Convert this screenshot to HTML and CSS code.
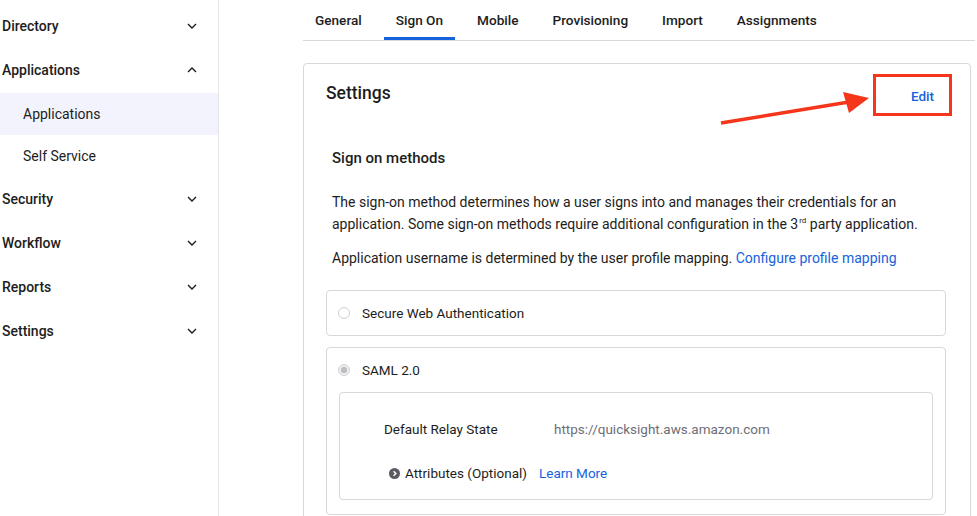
FILE: index.html
```html
<!DOCTYPE html>
<html lang="en">
<head>
    <meta charset="UTF-8">
    <meta name="viewport" content="width=device-width, initial-scale=1.0">
    <link rel="stylesheet" href="styles.css">
    <title>Sign On</title>
</head>
<body>
    <div class="page">
        <nav class="sidebar">
            <div class="nav-item">Directory <svg class="chev" viewBox="0 0 10 6"><path d="M1 1l4 4 4-4"/></svg></div>
            <div class="nav-item">Applications <svg class="chev" viewBox="0 0 10 6"><path d="M1 5l4-4 4 4"/></svg></div>
            <div class="nav-sub active">Applications</div>
            <div class="nav-sub">Self Service</div>
            <div class="nav-item">Security <svg class="chev" viewBox="0 0 10 6"><path d="M1 1l4 4 4-4"/></svg></div>
            <div class="nav-item">Workflow <svg class="chev" viewBox="0 0 10 6"><path d="M1 1l4 4 4-4"/></svg></div>
            <div class="nav-item">Reports <svg class="chev" viewBox="0 0 10 6"><path d="M1 1l4 4 4-4"/></svg></div>
            <div class="nav-item">Settings <svg class="chev" viewBox="0 0 10 6"><path d="M1 1l4 4 4-4"/></svg></div>
        </nav>

        <main class="main">
            <div class="tabs">
                <div class="tab">General</div>
                <div class="tab active">Sign On</div>
                <div class="tab">Mobile</div>
                <div class="tab">Provisioning</div>
                <div class="tab">Import</div>
                <div class="tab">Assignments</div>
            </div>

            <section class="card">
                <div class="card-head">
                    <h2>Settings</h2>
                    <a class="edit" href="#">Edit</a>
                    <div class="highlight"></div>
                    <svg class="arrow" width="160" height="36" viewBox="0 0 160 36">
                        <line x1="2" y1="32" x2="130" y2="11" stroke="#f5361b" stroke-width="3.5"/>
                        <polygon points="150,7 124,1 130,22" fill="#f5361b"/>
                    </svg>
                </div>

                <h3>Sign on methods</h3>
                <p class="desc">The sign-on method determines how a user signs into and manages their credentials for an application. Some sign-on methods require additional configuration in the 3<sup>rd</sup> party application.</p>
                <p class="desc">Application username is determined by the user profile mapping. <a href="#">Configure profile mapping</a></p>

                <div class="option first">
                    <div class="option-row"><span class="radio"></span>Secure Web Authentication</div>
                </div>
                <div class="option">
                    <div class="option-row"><span class="radio checked"></span>SAML 2.0</div>
                    <div class="inner">
                        <div class="field">
                            <span class="label">Default Relay State</span>
                            <span class="value">https://quicksight.aws.amazon.com</span>
                        </div>
                        <div class="attrs">
                            <svg class="toggle" viewBox="0 0 12 12"><circle cx="6" cy="6" r="6"/><path d="M5 3.5l2.5 2.5L5 8.5"/></svg>
                            Attributes (Optional)
                            <a href="#">Learn More</a>
                        </div>
                    </div>
                </div>
            </section>
        </main>
    </div>
</body>
</html>
```

FILE: styles.css
```css
body {
    margin: 0;
    font-family: Roboto, "Noto Sans", sans-serif;
    color: #1d1d21;
    background: #fff;
    overflow: hidden;
}

a {
    color: #1662dd;
    text-decoration: none;
}

.page {
    display: flex;
    height: 516px;
}

.sidebar {
    width: 218px;
    flex-shrink: 0;
    border-right: 1px solid #e5e5e8;
    padding-top: 4px;
}

.nav-item {
    display: flex;
    justify-content: space-between;
    align-items: center;
    height: 44px;
    padding: 0 21px 0 2px;
    font-size: 14px;
    font-weight: 500;
}

.chev {
    width: 10px;
    height: 6px;
    fill: none;
    stroke: #1d1d21;
    stroke-width: 1.4;
}

.nav-sub {
    height: 42px;
    line-height: 42px;
    padding-left: 23px;
    font-size: 14px;
}

.nav-sub.active {
    margin-top: 1px;
    background: #f2f3fd;
}

.main {
    margin-left: 84px;
    width: 672px;
}

.tabs {
    display: flex;
    gap: 10px;
    border-bottom: 1px solid #d7d7dc;
    height: 40px;
    margin-bottom: -1px;
}

.tab {
    font-size: 13.6px;
    font-weight: 500;
    line-height: 40px;
    padding: 0 12px;
}

.tab.active {
    box-shadow: inset 0 -3px 0 #1662dd;
}

.card {
    margin-top: 23px;
    border: 1px solid #d7d7dc;
    border-radius: 4px;
    padding: 0 24px 0 22px;
    width: 620px;
    height: 460px;
}

.card-head {
    position: relative;
    display: flex;
    justify-content: space-between;
    align-items: center;
    height: 58px;
}

.card-head h2 {
    margin: 0;
    font-size: 17.5px;
    font-weight: 500;
}

.edit {
    font-size: 13.5px;
    font-weight: 500;
    margin-right: 12px;
    margin-top: 6px;
}

.highlight {
    position: absolute;
    right: -6px;
    top: 10px;
    width: 73px;
    height: 36px;
    border: 3px solid #f5361b;
}

.arrow {
    position: absolute;
    left: 393px;
    top: 27px;
}

h3 {
    margin: 27px 0 0 6px;
    font-size: 15px;
    font-weight: 500;
}

.desc {
    margin: 24px 0 0 6px;
    font-size: 14px;
    line-height: 22px;
}

.desc + .desc {
    margin-top: 12px;
}

sup {
    font-size: 8px;
    line-height: 0;
    margin-left: 1px;
}

.option {
    border: 1px solid #d7d7dc;
    border-radius: 4px;
    margin-top: 11px;
}

.option.first {
    margin-top: 21px;
}

.option-row {
    display: flex;
    align-items: center;
    height: 44px;
    padding-left: 11px;
    font-size: 13.5px;
}

.radio {
    width: 10px;
    height: 10px;
    border-radius: 50%;
    border: 1px solid #d0d0d5;
    margin-right: 12px;
}

.radio.checked {
    background: radial-gradient(circle, #bdbdc2 3px, #eee 3.5px);
}

.inner {
    margin: 0 12px 14px;
    border: 1px solid #d7d7dc;
    border-radius: 4px;
    padding: 23px 44px 18px;
    font-size: 13.5px;
}

.field {
    display: flex;
    height: 26px;
    align-items: center;
}

.label {
    width: 170px;
}

.value {
    color: #6e6e78;
}

.attrs {
    display: flex;
    align-items: center;
    margin-top: 23px;
    margin-left: 5px;
}

.toggle {
    width: 11px;
    height: 11px;
    margin-right: 5px;
}

.toggle circle {
    fill: #5a5a62;
}

.toggle path {
    fill: none;
    stroke: #fff;
    stroke-width: 1.6;
}

.attrs a {
    margin-left: 12px;
}
```
